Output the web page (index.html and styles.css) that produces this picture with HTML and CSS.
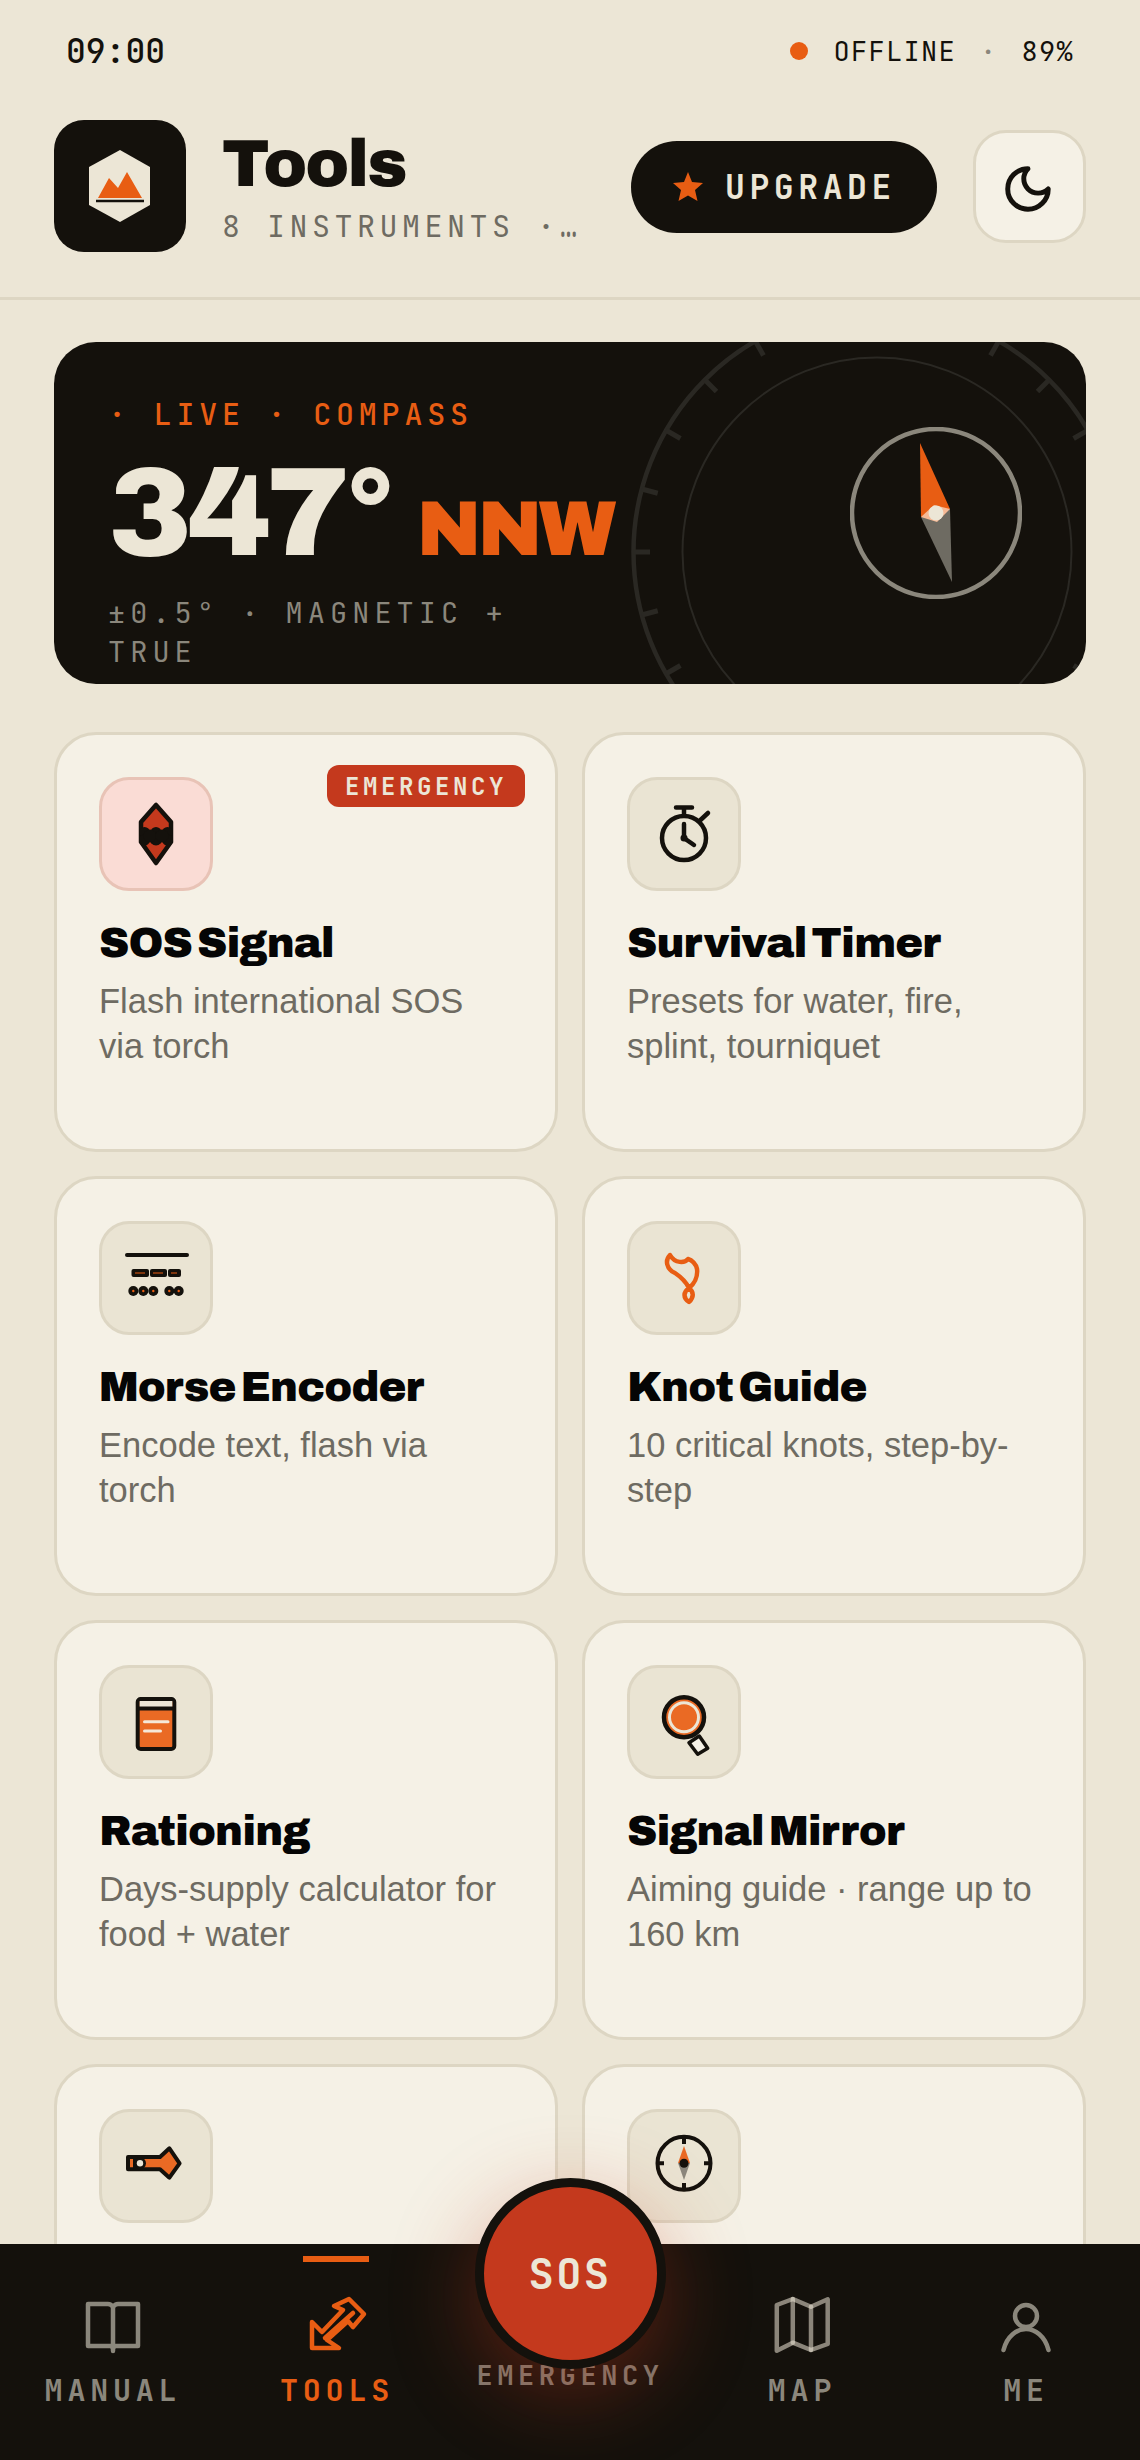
FILE: index.html
```html
<!DOCTYPE html>
<html lang="en">
<head>
<meta charset="utf-8">
<title>Tools</title>
<link rel="stylesheet" href="styles.css">
</head>
<body>
<div class="app">
  <div class="status">
    <span class="time">09:00</span>
    <div class="status-right"><i class="status-dot"></i><span>OFFLINE</span><span class="status-sep">·</span><span>89%</span></div>
  </div>
  <header class="header">
    <div class="logo">
      <svg viewBox="0 0 132 132" width="132" height="132"><polygon points="66,30 96,47 96,85 66,102 35,85 35,47" fill="#ECE6D6"/><polygon points="44,78 55,58 64,68 73,52 88,78" fill="#E85D13"/><line x1="42" y1="81" x2="90" y2="81" stroke="#14110C" stroke-width="2.5"/></svg>
    </div>
    <div class="titles">
      <h1 class="title">Tools</h1>
      <div class="subtitle">8 INSTRUMENTS · OFFLINE READY</div>
    </div>
    <button class="upgrade"><svg viewBox="0 0 30 30" width="30" height="30"><polygon points="15,0 19,10 30,11 22,18 24.5,29 15,23.5 5.5,29 8,18 0,11 11,10" fill="#E85D13"/></svg><span>UPGRADE</span></button>
    <button class="theme"><svg viewBox="0.9 -1.3 24 24" width="54" height="54"><path d="M12 3a6 6 0 0 0 9 9 9 9 0 1 1-9-9Z" fill="none" stroke="#14110C" stroke-width="2.2" stroke-linejoin="round"/></svg></button>
  </header>
  <main class="main">
    <section class="hero">
      <svg class="dial" viewBox="0 0 500 500" width="500" height="500">
        <circle cx="250" cy="250" r="243.5" class="ring-o"/>
        <circle cx="250" cy="250" r="194.5" class="ring-i"/>
        <g class="ticks">
          <line x1="6.5" y1="250" x2="23" y2="250"/>
          <line x1="6.5" y1="250" x2="23" y2="250" transform="rotate(15 250 250)"/>
          <line x1="6.5" y1="250" x2="23" y2="250" transform="rotate(30 250 250)"/>
          <line x1="6.5" y1="250" x2="23" y2="250" transform="rotate(45 250 250)"/>
          <line x1="6.5" y1="250" x2="23" y2="250" transform="rotate(60 250 250)"/>
          <line x1="6.5" y1="250" x2="23" y2="250" transform="rotate(120 250 250)"/>
          <line x1="6.5" y1="250" x2="23" y2="250" transform="rotate(135 250 250)"/>
          <line x1="6.5" y1="250" x2="23" y2="250" transform="rotate(150 250 250)"/>
          <line x1="6.5" y1="250" x2="23" y2="250" transform="rotate(165 250 250)"/>
          <line x1="6.5" y1="250" x2="23" y2="250" transform="rotate(180 250 250)"/>
          <line x1="6.5" y1="250" x2="23" y2="250" transform="rotate(-15 250 250)"/>
          <line x1="6.5" y1="250" x2="23" y2="250" transform="rotate(-30 250 250)"/>
          <line x1="6.5" y1="250" x2="23" y2="250" transform="rotate(-45 250 250)"/>
          <line x1="6.5" y1="250" x2="23" y2="250" transform="rotate(-150 250 250)"/>
          <line x1="6.5" y1="250" x2="23" y2="250" transform="rotate(-165 250 250)"/>
        </g>
      </svg>
      <div class="hero-text">
        <div class="hero-label">· LIVE · COMPASS</div>
        <div class="hero-read"><span class="deg">347°</span><span class="dir">NNW</span></div>
        <div class="hero-sub">±0.5° · MAGNETIC + TRUE</div>
      </div>
      <svg class="needle" viewBox="0 0 172 172" width="172" height="172">
        <circle cx="86" cy="86" r="84" fill="none" stroke="#8B877C" stroke-width="4.5"/>
        <polygon points="70,16 100,82 71,90" fill="#E85D13"/>
        <polygon points="102,155 100,82 71,90" fill="#6E6B62"/>
        <polygon points="71,90 84,78 100,82 87,95" fill="#F6B995"/>
        <circle cx="86" cy="86" r="7.5" fill="#ECE6D6"/>
      </svg>
    </section>

    <section class="grid">
      <article class="card">
        <span class="badge">EMERGENCY</span>
        <div class="icon icon-red">
          <svg viewBox="0 0 72 72" width="72" height="72"><polygon points="36,7 21,24 21,44 36,65 51,44 51,24" fill="#C4391D" stroke="#14110C" stroke-width="4.5" stroke-linejoin="round"/><g fill="#14110C"><circle cx="24.5" cy="34.5" r="5.5"/><circle cx="36" cy="34.5" r="5.5"/><circle cx="47.5" cy="34.5" r="5.5"/><circle cx="24.5" cy="42" r="5.5"/><circle cx="36" cy="41" r="6.5"/><circle cx="47.5" cy="42" r="5.5"/><circle cx="30" cy="38" r="6.5"/><circle cx="42" cy="38" r="6.5"/></g></svg>
        </div>
        <h2 class="card-title">SOS Signal</h2>
        <p class="card-desc">Flash international SOS via torch</p>
      </article>
      <article class="card">
        <div class="icon">
          <svg viewBox="0 0 72 72" width="72" height="72" fill="none" stroke="#14110C" stroke-linecap="round" stroke-width="4.5"><circle cx="36" cy="40" r="22"/><path d="M28 9.5H44M36 9.5V17M52.5 22L60 15M36 26V40L46 47"/><circle cx="36" cy="40" r="3.5" fill="#14110C" stroke="none"/></svg>
        </div>
        <h2 class="card-title">Survival Timer</h2>
        <p class="card-desc">Presets for water, fire, splint, tourniquet</p>
      </article>
      <article class="card">
        <div class="icon">
          <svg viewBox="0 0 72 72" width="72" height="72"><line x1="7" y1="13" x2="67" y2="13" stroke="#14110C" stroke-width="4" stroke-linecap="round"/><g fill="#14110C"><rect x="11.5" y="27" width="17.5" height="8" rx="2"/><rect x="30" y="27" width="17" height="8" rx="2"/><rect x="48" y="27" width="13" height="8" rx="2"/><circle cx="13.3" cy="49" r="5"/><circle cx="23.3" cy="49" r="5"/><circle cx="33.3" cy="49" r="5"/><circle cx="49.3" cy="49" r="5"/><circle cx="58.7" cy="49" r="5"/></g><path d="M15 31H25M33 31H43M51 31H57" stroke="#E85D13"/><g fill="#E85D13"><circle cx="13.3" cy="49" r="1.2"/><circle cx="23.3" cy="49" r="1.2"/><circle cx="33.3" cy="49" r="1.2"/><circle cx="49.3" cy="49" r="1.2"/><circle cx="58.7" cy="49" r="1.2"/></g></svg>
        </div>
        <h2 class="card-title">Morse Encoder</h2>
        <p class="card-desc">Encode text, flash via torch</p>
      </article>
      <article class="card">
        <div class="icon">
          <svg viewBox="0 0 72 72" width="72" height="72"><path d="M22 13C17 18 18 27 27 31C33 35 38 40 41 46C35 50 35 56 41 60C46 55 46 50 41 46C46 42 50 35 49 27C48 22 44 18 40 17C37 21 27 22 22 13Z" fill="none" stroke="#E85D13" stroke-width="4.5" stroke-linejoin="round"/></svg>
        </div>
        <h2 class="card-title">Knot Guide</h2>
        <p class="card-desc">10 critical knots, step-by-step</p>
      </article>
      <article class="card">
        <div class="icon">
          <svg viewBox="0 0 72 72" width="72" height="72"><rect x="17.7" y="13" width="36.6" height="50" rx="3" fill="#EA6A24" stroke="#14110C" stroke-width="4"/><rect x="19.7" y="15" width="32.6" height="7" fill="#ECE6D6"/><line x1="17.7" y1="22.5" x2="54.3" y2="22.5" stroke="#14110C" stroke-width="4"/><path d="M24.5 35.7H48M24.5 45H40.5" stroke="#F5E8D8" stroke-width="3" stroke-linecap="round"/></svg>
        </div>
        <h2 class="card-title">Rationing</h2>
        <p class="card-desc">Days-supply calculator for food + water</p>
      </article>
      <article class="card">
        <div class="icon">
          <svg viewBox="0 0 72 72" width="72" height="72"><polygon points="41,56.7 51.3,50 59.7,62.3 49.7,68.3" fill="#F5F1E6" stroke="#14110C" stroke-width="3.5" stroke-linejoin="round"/><circle cx="36" cy="31.3" r="20" fill="#EA6A24" stroke="#14110C" stroke-width="4.5"/><circle cx="36" cy="31.3" r="14.5" fill="none" stroke="#ECE6D6" stroke-width="3"/></svg>
        </div>
        <h2 class="card-title">Signal Mirror</h2>
        <p class="card-desc">Aiming guide · range up to 160 km</p>
      </article>
      <article class="card">
        <div class="icon">
          <svg viewBox="0 0 72 72" width="72" height="72"><path d="M8 27H40L49.4 18.3L59.6 33.3L49.4 47.7L40 39.3H8Z" fill="#EA6A24" stroke="#14110C" stroke-width="4" stroke-linejoin="round"/><rect x="13" y="27" width="5" height="12" fill="#14110C"/><circle cx="20" cy="33.3" r="6" fill="#14110C"/><circle cx="20" cy="33.3" r="3.2" fill="#ECE6D6"/></svg>
        </div>
      </article>
      <article class="card">
        <div class="icon">
          <svg viewBox="0 0 72 72" width="72" height="72"><circle cx="36" cy="33.3" r="26.5" fill="none" stroke="#14110C" stroke-width="4"/><path d="M36 7V14M36 53V60M10 33.3H16M56 33.3H62" stroke="#14110C" stroke-width="4"/><polygon points="36,16 42,33 30,33" fill="#EA6A24"/><polygon points="36,50 42,33 30,33" fill="#8B877C"/><circle cx="36" cy="33.3" r="4.5" fill="#14110C"/></svg>
        </div>
      </article>
    </section>
  </main>
  <nav class="nav">
    <a class="nav-item">
      <svg viewBox="0 0 72 72" width="72" height="72" class="nav-icon"><path d="M11 15H31Q34 15 36 18Q38 15 41 15H61V57H39Q37 57 36 60Q35 57 33 57H11ZM36 18V62" fill="none" stroke="currentColor" stroke-width="4.5" stroke-linejoin="round" stroke-linecap="round"/></svg>
      <span>MANUAL</span>
    </a>
    <a class="nav-item active">
      <i class="nav-bar"></i>
      <svg viewBox="0 0 72 72" width="72" height="72" class="nav-icon"><path d="M11 59V33L21 43L42 21L33 17L48 10L63 25L52 38L47 32L26 51L38 59ZM24 49L52 24" fill="none" stroke="currentColor" stroke-width="4.5" stroke-linejoin="round" stroke-linecap="round"/></svg>
      <span>TOOLS</span>
    </a>
    <a class="nav-item nav-sos">
      <span>EMERGENCY</span>
    </a>
    <a class="nav-item">
      <svg viewBox="0 0 72 72" width="72" height="72" class="nav-icon nav-map"><path d="M10.8 16L26.8 10L45 17.7L61.7 10.3V55L45 61L26.8 53.7L10.8 61.7Z"/><path d="M26.8 10V53.7"/><path d="M45 17.7V61"/></svg>
      <span>MAP</span>
    </a>
    <a class="nav-item">
      <svg viewBox="0 0 72 72" width="72" height="72" class="nav-icon"><circle cx="36" cy="27" r="11" fill="none" stroke="currentColor" stroke-width="4.5"/><path d="M13.5 61C17 47 27 40 36 40C45 40 55 47 58.5 61" fill="none" stroke="currentColor" stroke-width="4.5" stroke-linecap="round"/></svg>
      <span>ME</span>
    </a>
    <button class="fab">SOS</button>
  </nav>
</div>
</body>
</html>
```
FILE: styles.css
```css
* { box-sizing: border-box; }
html, body { margin: 0; padding: 0; background: #ECE6D6; }
.app {
  position: relative;
  width: 1140px;
  height: 2460px;
  overflow: hidden;
  background: #ECE6D6;
  color: #14110C;
  font-family: "Liberation Sans", Arial, sans-serif;
}
.status, .subtitle, .upgrade, .hero-label, .hero-sub, .badge, .nav-item, .fab {
  font-family: "JetBrains Mono", "DejaVu Sans Mono", monospace;
}
.status {
  height: 102px;
  padding: 0 66px;
  display: flex;
  align-items: center;
  justify-content: space-between;
}
.time { font-size: 33px; font-weight: 500; }
.status-right {
  display: flex;
  align-items: center;
  gap: 24px;
  font-size: 27px;
  letter-spacing: 1.3px;
}
.status-dot { width: 18px; height: 18px; border-radius: 50%; background: #E85D13; margin-right: 2px; }
.status-sep { color: #8B877C; }

.header {
  display: flex;
  align-items: center;
  gap: 36px;
  padding: 18px 54px 45px;
  border-bottom: 3px solid #DDD6C3;
}
.logo {
  width: 132px;
  height: 132px;
  flex: none;
  border-radius: 30px;
  background: #14110C;
}
.logo svg { display: block; }
.titles { flex: 1; min-width: 0; }
.title {
  margin: 0;
  font-family: "Archivo Black", Inter, "Liberation Sans", sans-serif;
  font-weight: 400;
  font-size: 66px;
  line-height: 72px;
  letter-spacing: -2px;
}
.subtitle {
  margin-top: 8px;
  font-size: 30px;
  line-height: 36px;
  letter-spacing: 4.5px;
  color: #6E6B62;
  white-space: nowrap;
  overflow: hidden;
  text-overflow: ellipsis;
}
.upgrade {
  flex: none;
  width: 306px;
  height: 92px;
  margin-top: 1px;
  padding: 0 0 0 42px;
  display: flex;
  align-items: center;
  gap: 22px;
  border: 0;
  border-radius: 46px;
  background: #14110C;
  color: #ECE6D6;
  font-size: 33px;
  font-weight: 700;
  letter-spacing: 4.62px;
}
.theme {
  flex: none;
  width: 113px;
  height: 113px;
  padding: 0;
  display: flex;
  align-items: center;
  justify-content: center;
  border: 3px solid #DDD6C3;
  border-radius: 33px;
  background: #F5F1E6;
}

.main { padding: 42px 54px 0; }
.hero {
  position: relative;
  height: 342px;
  padding: 54px 64px 0 54px;
  display: flex;
  align-items: flex-start;
  justify-content: space-between;
  border-radius: 42px;
  background: #14110C;
  overflow: hidden;
}
.dial { position: absolute; left: 573px; top: -40px; }
.ring-o { fill: none; stroke: #2A2823; stroke-width: 4.5; }
.ring-i { fill: none; stroke: #2A2823; stroke-width: 2; }
.ticks line { stroke: #2A2823; stroke-width: 5; }
.hero-text { position: relative; width: 440px; }
.hero-label {
  font-size: 30px;
  line-height: 36px;
  font-weight: 500;
  letter-spacing: 4.8px;
  color: #E85D13;
  white-space: nowrap;
}
.hero-read {
  display: flex;
  align-items: baseline;
  gap: 26px;
  height: 150px;
  white-space: nowrap;
  font-family: "Archivo Black", Inter, "Liberation Sans", sans-serif;
  font-weight: 400;
}
.deg { font-size: 126px; line-height: 162px; color: #ECE6D6; letter-spacing: -5px; }
.dir { font-size: 78px; color: #E85D13; letter-spacing: -4px; }
.hero-sub {
  margin-top: 12px;
  font-size: 28.5px;
  line-height: 39px;
  letter-spacing: 5.1px;
  color: #8B877C;
}
.needle { position: relative; align-self: center; margin-top: -54px; }

.grid {
  margin-top: 48px;
  display: grid;
  grid-template-columns: 1fr 1fr;
  grid-auto-rows: 420px;
  gap: 24px;
}
.card {
  position: relative;
  padding: 42px;
  border: 3px solid #DDD6C3;
  border-radius: 42px;
  background: #F5F1E6;
}
.icon {
  width: 114px;
  height: 114px;
  display: flex;
  align-items: center;
  justify-content: center;
  border: 3px solid #DDD6C3;
  border-radius: 30px;
  background: #EAE4D3;
}
.icon-red { background: #FADCD5; border-color: #E8C3B6; }
.badge {
  position: absolute;
  top: 30px;
  right: 30px;
  height: 42px;
  padding: 0 18px;
  display: flex;
  align-items: center;
  border-radius: 12px;
  background: #C4391D;
  color: #ECE6D6;
  font-size: 24px;
  font-weight: 700;
  letter-spacing: 3.6px;
}
.card-title {
  margin: 25px 0 0;
  font-family: "Archivo Black", Inter, "Liberation Sans", sans-serif;
  font-weight: 400;
  font-size: 42px;
  line-height: 54px;
  letter-spacing: -.9px;
  word-spacing: -8px;
  color: #050505;
}
.card-desc {
  margin: 9px 0 0;
  font-size: 34.5px;
  line-height: 45px;
  color: #6E6B62;
}

.nav {
  position: absolute;
  left: 0;
  right: 0;
  bottom: 0;
  height: 216px;
  display: grid;
  grid-template-columns: 226px 222px 244px 220px 228px;
  background: #14110C;
}
.nav-item {
  position: relative;
  display: flex;
  flex-direction: column;
  align-items: center;
  padding-top: 45px;
  color: #8B877C;
  font-size: 30px;
  font-weight: 700;
  letter-spacing: 4.8px;
  line-height: 36px;
}
.nav-icon { display: block; margin-bottom: 11px; }
.nav-map { fill: none; stroke: rgba(236,230,214,.55); stroke-width: 4.5; stroke-linejoin: round; stroke-linecap: round; }
.nav-item.active { color: #E85D13; }
.nav-bar {
  position: absolute;
  top: 12px;
  left: 77px;
  width: 66px;
  height: 6px;
  background: #E85D13;
}
.nav-sos {
  padding-top: 113px;
  font-size: 27px;
  letter-spacing: 4.6px;
  color: rgba(236,230,214,.5);
}
.fab {
  position: absolute;
  left: 474.5px;
  top: -66px;
  width: 191px;
  height: 191px;
  padding: 0;
  border: 9px solid #14110C;
  border-radius: 50%;
  background: #C4391D;
  color: #ECE6D6;
  font-size: 42px;
  font-weight: 700;
  letter-spacing: 2.5px;
  box-shadow: 0 24px 84px rgba(196,57,29,.38);
}
```
